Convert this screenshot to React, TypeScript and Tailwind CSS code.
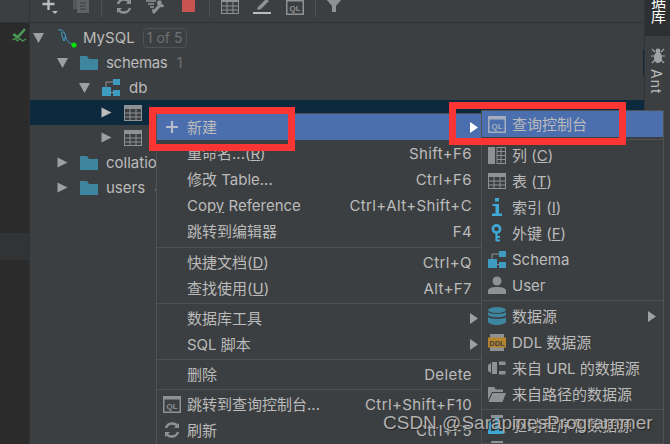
import React from "react";

const G = "#8e9294";
const Tri = ({ c = "#9da0a2", d = "right" }: { c?: string; d?: "right" | "down" }) => (
  <svg width="11" height="11" viewBox="0 0 11 11" className="shrink-0">
    {d === "right" ? <path d="M0.5 0.5 L10.5 5.5 L0.5 10.5Z" fill={c} /> : <path d="M0 1 L11 1 L5.5 11Z" fill={c} />}
  </svg>
);
const Folder = () => (
  <svg width="18" height="14" viewBox="0 0 18 14" className="shrink-0">
    <path d="M0 0 H7 L9 3 H18 V14 H0Z" fill="#3e86a0" />
  </svg>
);
const SchemaIc = ({ c = "#3e9cc0" }: { c?: string }) => (
  <svg width="18" height="17" viewBox="0 0 18 17" className="shrink-0">
    <rect x="0" y="8" width="9" height="9" fill={c} />
    <rect x="11" y="0" width="7" height="6" fill={c} />
    <rect x="11" y="11" width="7" height="6" fill={c} />
    <path d="M4 8 V3 H11 M9 13.5 H11" stroke="#8e9294" fill="none" />
  </svg>
);
const TableIc = ({ c = G }: { c?: string }) => (
  <svg width="18" height="16" viewBox="0 0 18 16" className="shrink-0">
    <rect x="0.5" y="0.5" width="17" height="15" fill="#3c3f41" stroke={c} />
    <rect x="0" y="0" width="18" height="4" fill={c} />
    <path d="M6 4 V16 M12 4 V16 M0 8 H18 M0 12 H18" stroke={c} />
  </svg>
);
const QlIc = ({ s = "#8e9294" }: { s?: string }) => (
  <svg width="18" height="17" viewBox="0 0 18 17" className="shrink-0">
    <rect x="0.75" y="0.75" width="16.5" height="15.5" fill="none" stroke={s} strokeWidth="1.5" />
    <rect x="0" y="0" width="18" height="3.5" fill={s} />
    <text x="9" y="13" textAnchor="middle" fontSize="8" fontWeight="700" fill={s} fontFamily="Liberation Sans, sans-serif">QL</text>
  </svg>
);
const RefreshIc = () => (
  <svg width="16" height="16" viewBox="0 0 16 16" fill="none" stroke={G} strokeWidth="2.4">
    <path d="M14 5 A6.5 6.5 0 0 0 2 6" />
    <path d="M2 11 A6.5 6.5 0 0 0 14 10" />
    <path d="M10 6 H15 V1Z M6 10 H1 V15Z" fill={G} stroke="none" />
  </svg>
);
const ColIc = () => (
  <svg width="18" height="17" viewBox="0 0 18 17">
    <rect x="0" y="0" width="7" height="17" fill={G} />
    <rect x="9" y="0.5" width="8.5" height="16" fill="none" stroke={G} />
    <path d="M9 4.5 H18 M9 8.5 H18 M9 12.5 H18 M13 0 V17" stroke={G} />
  </svg>
);
const InfoIc = () => (
  <svg width="18" height="18" viewBox="0 0 18 18">
    <rect x="7" y="0" width="4" height="3.5" fill="#3fa9d6" />
    <path d="M4.5 6 H11 V15.5 H14 V18 H4 V15.5 H7.5 V8 H4.5Z" fill="#3fa9d6" />
  </svg>
);
const KeyIc = () => (
  <svg width="14" height="18" viewBox="0 0 14 18" fill="none">
    <circle cx="6.5" cy="5" r="3.6" stroke="#3fa9d6" strokeWidth="2.6" />
    <path d="M6.5 9 V17 M6.5 13 H10 M6.5 16.5 H10" stroke="#3fa9d6" strokeWidth="2.2" />
  </svg>
);
const UserIc = () => (
  <svg width="18" height="18" viewBox="0 0 18 18" fill={G}>
    <circle cx="9" cy="5" r="4.5" />
    <path d="M0 18 V15 C0 11.5 5 11 9 11 C13 11 18 11.5 18 15 V18Z" />
  </svg>
);
const DbIc = () => (
  <svg width="18" height="18" viewBox="0 0 18 18" fill="#3e86a0">
    <ellipse cx="9" cy="3" rx="9" ry="3" />
    <path d="M0 5 C2 7.5 16 7.5 18 5 V8 C16 11 2 11 0 8Z" />
    <path d="M0 10 C2 12.5 16 12.5 18 10 V15 C16 19 2 19 0 15Z" />
  </svg>
);
const DdlIc = () => (
  <svg width="18" height="17" viewBox="0 0 18 17">
    <rect x="2" y="0" width="14" height="17" fill={G} />
    <rect x="0" y="3.5" width="18" height="10" fill="#b5862e" />
    <text x="9" y="11.5" textAnchor="middle" fontSize="7.5" fontWeight="700" fill="#3c3f41" fontFamily="Liberation Sans, sans-serif">DDL</text>
  </svg>
);
const PlugIc = () => (
  <svg width="18" height="16" viewBox="0 0 18 16" fill={G}>
    <path d="M0 5 L3 3 V13 L0 11Z" />
    <path d="M4 2 H9 V14 H4Z" />
    <path d="M11 1.5 H17.5 V5 H11Z M11 11 H17.5 V14.5 H11Z" />
  </svg>
);
const FolderOpenIc = () => (
  <svg width="18" height="15" viewBox="0 0 18 15" fill={G}>
    <path d="M0 0 H6 L8 2.5 H15 V5 H4 L0 13Z" />
    <path d="M4.5 6 H18 L14.5 15 H0.5Z" />
  </svg>
);
const DriverIc = () => (
  <svg width="18" height="20" viewBox="0 0 18 20">
    <rect x="3" y="0" width="12" height="3" fill={G} />
    <rect x="7" y="3" width="4" height="14" fill="#3fa9d6" />
    <rect x="0" y="16" width="18" height="3" fill="#3fa9d6" />
    <rect x="0" y="5" width="3" height="11" fill="#3fa9d6" />
  </svg>
);

type Row = { t: React.ReactNode; k?: string; icon?: React.ReactNode; arrow?: boolean; active?: boolean };

const MItem = ({ r, sub }: { r: Row; sub?: boolean }) => (
  <div className={`flex items-center h-[26px] pl-[6px] pr-[4px] ${r.active ? "bg-[#4b6eaf]" : ""}`}>
    <div className="w-[18px] flex justify-center shrink-0">{r.icon}</div>
    <div className="ml-[6px] whitespace-nowrap flex-1 truncate">{r.t}</div>
    {r.k && <div className="whitespace-nowrap mr-[6px] text-right tracking-[0.4px]">{r.k}</div>}
    {r.arrow && (
      <div className={sub ? "mr-[3px]" : "ml-auto"}>
        <svg width="8" height="11" viewBox="0 0 8 11"><path d="M0 0 L8 5.5 L0 11Z" fill={r.active ? "#ffffff" : "#9da0a2"} /></svg>
      </div>
    )}
  </div>
);
const Sep = () => (
  <div className="h-[4px] flex items-center"><div className="h-px w-full bg-[#515151]" /></div>
);
const Sep5 = () => (
  <div className="h-[5px] pt-[2px]"><div className="h-px w-full bg-[#515151]" /></div>
);

const TreeRow = ({ indent, arrow, icon, children, sel }: { indent: number; arrow: "right" | "down"; icon: React.ReactNode; children?: React.ReactNode; sel?: boolean }) => (
  <div className={`h-[25px] flex items-center ${sel ? "bg-[#0d293e]" : ""}`} style={{ paddingLeft: indent }}>
    <Tri d={arrow} c={sel ? "#bbbbbb" : "#9da0a2"} />
    <div className="ml-[12px] flex items-center">{icon}</div>
    {children}
  </div>
);

export default function App() {
  const u = (a: string, m: string, b = "") => <>{a}<u>{m}</u>{b}</>;
  return (
    <div className="relative w-[670px] h-[444px] overflow-hidden flex bg-[#3c3f41] text-[#bbbbbb] text-[15px] leading-none font-['Inter','Noto_Sans_CJK_SC',sans-serif]">
      {/* gutter */}
      <div className="w-[30px] shrink-0 flex flex-col border-r border-[#323232]">
        <div className="h-[23px] border-b border-[#323232]" />
        <div className="h-[210px] bg-[#2b2b2b] pl-[12px] pt-[5px]">
          <svg width="15" height="15" viewBox="0 0 15 15" fill="none" stroke="#499c54">
            <path d="M1.5 6 L5.5 9.5 L13 1" strokeWidth="2.6" />
            <path d="M0.5 12 L3 10.5 L5.5 13 L8 10.5 L10.5 13 L14 11" strokeWidth="1.2" />
          </svg>
        </div>
        <div className="h-[27px] bg-[#313335]" />
        <div className="flex-1 bg-[#2b2b2b]" />
      </div>
      {/* main */}
      <div className="flex-1 min-w-0 flex flex-col">
        <div className="h-[23px] border-b border-[#323232] relative overflow-hidden flex items-start">
          <div className="flex items-start pt-0 -mt-[3px] w-full">
            <div className="ml-[12px] w-[20px] relative h-[18px]">
              <svg width="20" height="20" viewBox="0 0 20 20"><path d="M6.5 1 V13 M0.5 7 H12.5" stroke="#bbbbbb" strokeWidth="2.4" /><path d="M10 14 H16 L13 17Z" fill="#bbbbbb" /></svg>
            </div>
            <div className="ml-[11px] -mt-[1px]">
              <svg width="16" height="17" viewBox="0 0 16 17"><rect x="0" y="0" width="11" height="13" fill="#55585a" /><rect x="4" y="3" width="12" height="14" fill="#5f6264" /><path d="M7 7 H13 M7 10 H13 M7 13 H13" stroke="#3c3f41" /></svg>
            </div>
            <div className="h-[20px] w-px bg-[#515151] ml-[12px]" />
            <div className="ml-[14px] mt-[1px]"><RefreshIc /></div>
            <div className="ml-[14px] mt-[1px]">
              <svg width="20" height="17" viewBox="0 0 20 17" fill="none" stroke={G}><path d="M0 3 H10 M2 6 H8 M4 9 H8 M6 12 H8" strokeWidth="1.6" /><path d="M7 15 L15 6" strokeWidth="3" /><path d="M12 3 A4 4 0 0 0 18 8 L15 6 L15 3Z" fill={G} /></svg>
            </div>
            <div className="ml-[16px] w-[13px] h-[14px] mt-[1px] bg-[#c75450]" />
            <div className="h-[20px] w-px bg-[#515151] ml-[14px]" />
            <div className="ml-[11px] mt-[1px]"><TableIc /></div>
            <div className="ml-[14px] mt-[1px]">
              <svg width="18" height="17" viewBox="0 0 18 17"><path d="M5 9 L13 1 L16 3 L8 11 L4 12Z" fill={G} /><rect x="0" y="14" width="18" height="2" fill="#bbbbbb" /></svg>
            </div>
            <div className="ml-[15px] mt-[1px]"><QlIc /></div>
            <div className="h-[20px] w-px bg-[#515151] ml-[11px]" />
            <div className="ml-[10px]">
              <svg width="16" height="17" viewBox="0 0 16 17"><path d="M0 2 H16 L10 9 V15 H6 V9Z" fill={G} /></svg>
            </div>
          </div>
        </div>
        <div className="pt-[2px] flex-1 min-h-0">
          <TreeRow indent={3} arrow="down" icon={
            <svg width="20" height="20" viewBox="0 0 20 20" fill="none" className="ml-[1px]">
              <path d="M1 2 C6 1 8 5 9 10 C10 14 13 15 15 16 M5 4 C4 8 6 10 7 13 C8 11 8 10 8 9" stroke="#3fa9d6" strokeWidth="1" />
              <circle cx="17" cy="17" r="2.6" fill="#00e000" />
            </svg>
          }>
            <span className="ml-[6px]">MySQL</span>
            <span className="ml-[8px] h-[20px] w-[44px] flex items-center justify-center rounded-[4px] border border-[#4e5254] text-[#6d7173] text-[14px]">1 of 5</span>
          </TreeRow>
          <TreeRow indent={27} arrow="down" icon={<Folder />}><span className="ml-[8px] -tracking-[0.3px]">schemas</span><span className="ml-[9px] text-[#6d7173]">1</span></TreeRow>
          <TreeRow indent={49} arrow="down" icon={<SchemaIc />}><span className="ml-[9px]">db</span></TreeRow>
          <TreeRow indent={71} arrow="right" icon={<TableIc />} sel><span className="ml-[8px]">student</span></TreeRow>
          <TreeRow indent={71} arrow="right" icon={<TableIc />} />
          <TreeRow indent={27} arrow="right" icon={<Folder />}><span className="ml-[8px]">collations</span></TreeRow>
          <TreeRow indent={27} arrow="right" icon={<Folder />}><span className="ml-[8px]">users</span><span className="ml-[9px] text-[#6d7173]">4</span></TreeRow>
        </div>
      </div>
      {/* right strip */}
      <div className="w-[26px] shrink-0 border-l border-[#323232] flex flex-col items-center">
        <div className="h-[36px] w-full bg-[#2d2f30] overflow-hidden flex justify-center items-end pb-[12px]">
          <span className="[writing-mode:vertical-rl] text-white text-[15px] leading-none whitespace-nowrap">数据库</span>
        </div>
        <div className="mt-[12px]">
          <svg width="14" height="16" viewBox="0 0 14 16" fill="#a0a3a5">
            <circle cx="7" cy="3" r="2.4" /><ellipse cx="7" cy="9.5" rx="4" ry="5.5" />
            <path d="M1 1 L4 4 M13 1 L10 4 M0 8 H4 M14 8 H10 M1 15 L4 12 M13 15 L10 12" stroke="#a0a3a5" strokeWidth="1.2" />
          </svg>
        </div>
        <span className="mt-[5px] -ml-[3px] [writing-mode:vertical-rl] text-[14px] tracking-[1px]">Ant</span>
      </div>
      <div className="absolute left-[643px] top-[50px] w-px h-[25px] bg-[#0d293e]" />

      {/* context menu */}
      <div className="absolute left-[156px] top-[113px] w-[326px] bg-[#3c3f41] border-t border-l border-[#515151] h-[331px]">
        {([
          { t: "新建", icon: <svg width="14" height="14" viewBox="0 0 14 14"><path d="M7 1 V13 M1 7 H13" stroke="#b5bccb" strokeWidth="2.2" /></svg>, arrow: true, active: true },
          { t: u("重命名...(", "R", ")"), k: "Shift+F6" },
          { t: "修改 Table...", k: "Ctrl+F6" },
          { t: <>Cop<u>y</u> Reference</>, k: "Ctrl+Alt+Shift+C" },
          { t: "跳转到编辑器", k: "F4" },
        ] as Row[]).map((r, i) => <MItem key={i} r={r} />)}
        <div className="h-px" />
        <Sep />
        {([
          { t: u("快捷文档(", "D", ")"), k: "Ctrl+Q" },
          { t: u("查找使用(", "U", ")"), k: "Alt+F7" },
        ] as Row[]).map((r, i) => <MItem key={i} r={r} />)}
        <Sep />
        {([
          { t: "数据库工具", arrow: true },
          { t: "SQL 脚本", arrow: true },
        ] as Row[]).map((r, i) => <MItem key={i} r={r} />)}
        <Sep />
        <MItem r={{ t: "删除", k: "Delete" }} />
        <Sep />
        <MItem r={{ t: "跳转到查询控制台...", k: "Ctrl+Shift+F10", icon: <QlIc /> }} />
        <MItem r={{ t: "刷新", k: "Ctrl+F5", icon: <RefreshIc /> }} />
      </div>

      {/* submenu */}
      <div className="absolute left-[481px] top-[110px] w-[183px] h-[334px] bg-[#3c3f41] border border-[#515151] overflow-hidden">
        <MItem sub r={{ t: "查询控制台", icon: <QlIc s="#a4aebd" />, active: true }} />
        <Sep5 />
        {([
          { t: u("列 (", "C", ")"), icon: <ColIc /> },
          { t: u("表 (", "T", ")"), icon: <TableIc /> },
          { t: u("索引 (", "I", ")"), icon: <InfoIc /> },
          { t: u("外键 (", "F", ")"), icon: <KeyIc /> },
          { t: "Schema", icon: <SchemaIc /> },
          { t: "User", icon: <UserIc /> },
        ] as Row[]).map((r, i) => <MItem sub key={i} r={r} />)}
        <Sep5 />
        {([
          { t: "数据源", icon: <DbIc />, arrow: true },
          { t: "DDL 数据源", icon: <DdlIc /> },
          { t: "来自 URL 的数据源", icon: <PlugIc /> },
          { t: "来自路径的数据源", icon: <FolderOpenIc /> },
        ] as Row[]).map((r, i) => <MItem sub key={i} r={r} />)}
        <Sep5 />
        <MItem sub r={{ t: "驱动程序和数据源", icon: <DriverIc /> }} />
        <MItem sub r={{ t: "驱动程序", icon: <DriverIc /> }} />
      </div>

      {/* red annotation boxes */}
      <div className="absolute left-[149px] top-[107px] w-[146px] h-[44px] border-[7px] border-[#fb3434]" />
      <div className="absolute left-[449px] top-[102px] w-[177px] h-[43px] border-[7px] border-[#fb3434]" />

      {/* watermark */}
      <div className="absolute left-[383px] top-[411px] text-[19px] leading-[24px] text-[#b0b0b0] whitespace-nowrap font-['Liberation_Sans',sans-serif] [text-shadow:1px_1px_1px_#222]">CSDN @SarapinesProgrammer</div>
    </div>
  );
}
